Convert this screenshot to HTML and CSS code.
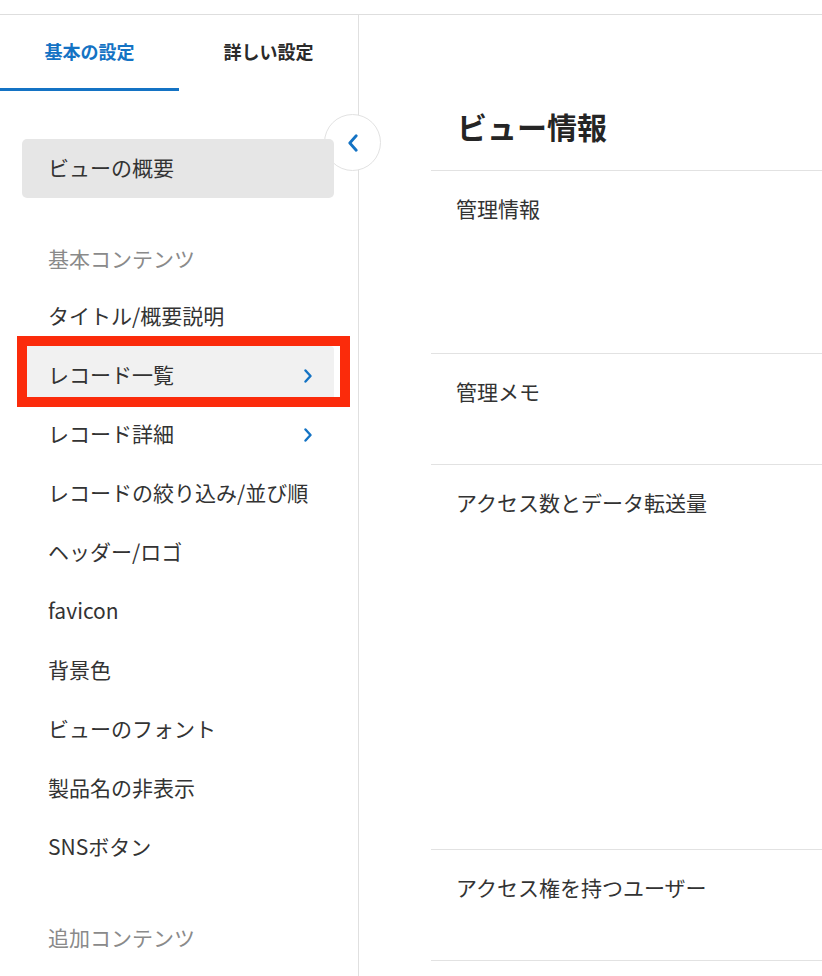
FILE: index.html
```html
<!DOCTYPE html>
<html>
<head>
    <meta name="viewport" content="width=device-width, initial-scale=1">
    <link rel="stylesheet" href="styles.css">
</head>
<body>

<div class="topbar"></div>

<div class="layout">
    <aside class="sidebar">
        <div class="tabs">
            <a href="#basic" class="tab active">基本の設定</a>
            <a href="#advanced" class="tab">詳しい設定</a>
        </div>

        <button class="collapse" type="button">
            <svg width="12" height="18" viewBox="0 0 12 18"><path d="M9.2 1.8 L2.8 9 L9.2 16.2" fill="none" stroke="#1473c4" stroke-width="2.8" stroke-linecap="round" stroke-linejoin="round"/></svg>
        </button>

        <nav class="menu">
            <a href="#overview" class="menu-item overview">ビューの概要</a>

            <div class="menu-group">
                <div class="menu-title">基本コンテンツ</div>
                <a href="#title" class="menu-item">タイトル/概要説明</a>
                <a href="#list" class="menu-item selected">
                    <span>レコード一覧</span>
                    <svg width="10" height="14" viewBox="0 0 10 14"><path d="M2.5 1.5 L7.5 7 L2.5 12.5" fill="none" stroke="#1473c4" stroke-width="2.4" stroke-linecap="round" stroke-linejoin="round"/></svg>
                    <span class="mark"></span>
                </a>
                <a href="#detail" class="menu-item">
                    <span>レコード詳細</span>
                    <svg width="10" height="14" viewBox="0 0 10 14"><path d="M2.5 1.5 L7.5 7 L2.5 12.5" fill="none" stroke="#1473c4" stroke-width="2.4" stroke-linecap="round" stroke-linejoin="round"/></svg>
                </a>
                <a href="#filter" class="menu-item">レコードの絞り込み/並び順</a>
                <a href="#header" class="menu-item">ヘッダー/ロゴ</a>
                <a href="#favicon" class="menu-item">favicon</a>
                <a href="#bg" class="menu-item">背景色</a>
                <a href="#font" class="menu-item">ビューのフォント</a>
                <a href="#product" class="menu-item">製品名の非表示</a>
                <a href="#sns" class="menu-item">SNSボタン</a>
            </div>

            <div class="menu-group">
                <div class="menu-title">追加コンテンツ</div>
            </div>
        </nav>
    </aside>

    <main class="content">
        <h1>ビュー情報</h1>
        <section class="panel panel-info">
            <h2>管理情報</h2>
        </section>
        <section class="panel panel-memo">
            <h2>管理メモ</h2>
        </section>
        <section class="panel panel-access">
            <h2>アクセス数とデータ転送量</h2>
        </section>
        <section class="panel panel-users">
            <h2>アクセス権を持つユーザー</h2>
        </section>
        <section class="panel"></section>
    </main>
</div>

</body>
</html>
```

FILE: styles.css
```css
body {
  margin: 0;
  font-family: "Noto Sans CJK JP", "Noto Sans", sans-serif;
  background: #fff;
  color: #333;
  overflow: hidden;
}
* {
  box-sizing: border-box;
}
a {
  color: inherit;
  text-decoration: none;
}

.topbar {
  height: 15px;
  border-bottom: 1px solid #dedede;
}

.layout {
  display: flex;
  height: calc(100vh - 15px);
}

/* left column */
.sidebar {
  position: relative;
  width: 359px;
  flex-shrink: 0;
  border-right: 1px solid #e0e0e0;
}

.tabs {
  display: grid;
  grid-template-columns: 1fr 1fr;
  height: 76px;
}

.tab {
  display: flex;
  align-items: center;
  justify-content: center;
  padding-bottom: 1px;
  font-size: 18px;
  font-weight: 700;
  color: #2a2a2a;
  border-bottom: 3px solid transparent;
}

.tab.active {
  color: #1473c4;
  border-bottom-color: #1473c4;
}

.collapse {
  position: absolute;
  left: 324px;
  top: 99px;
  width: 57px;
  height: 57px;
  padding: 0;
  border: 1px solid #e2e2e2;
  border-radius: 50%;
  background: #fff;
  display: flex;
  align-items: center;
  justify-content: center;
  cursor: pointer;
}

.menu {
  padding: 48px 24px 0 22px;
}

.menu-item {
  position: relative;
  display: flex;
  align-items: center;
  justify-content: space-between;
  height: 59px;
  padding: 0 21px 4px 26px;
  font-size: 21px;
  color: #333;
  border-radius: 4px;
}

.menu-item svg {
  margin-top: 4px;
}

.menu-item.overview {
  background: #e6e6e6;
  border-radius: 5px;
}

.menu-item.selected {
  background: #f1f1f1;
}

/* red frame around the current item */
.menu-item .mark {
  position: absolute;
  top: -10px;
  left: -5px;
  right: -16px;
  bottom: -2px;
  border: 10px solid #fb2b0b;
}

.menu-group {
  margin-top: 32px;
}

.menu-title {
  display: flex;
  align-items: center;
  height: 57px;
  padding: 0 0 1px 26px;
  font-size: 21px;
  color: #8a8a8a;
}

/* right column */
.content {
  flex: 1;
  padding-left: 72px;
}

.content h1 {
  margin: 0;
  padding: 90px 0 23px 26px;
  font-size: 30px;
  line-height: 42px;
  font-weight: 700;
  color: #252525;
}

.panel {
  border-top: 1px solid #e2e2e2;
  padding: 23px 25px 0;
}

.panel h2 {
  margin: 0;
  font-size: 21px;
  line-height: 28px;
  font-weight: 400;
  color: #333;
}

.panel-info {
  height: 183px;
}

.panel-memo {
  height: 111px;
}

.panel-access {
  height: 385px;
}

.panel-users {
  height: 111px;
}
```
